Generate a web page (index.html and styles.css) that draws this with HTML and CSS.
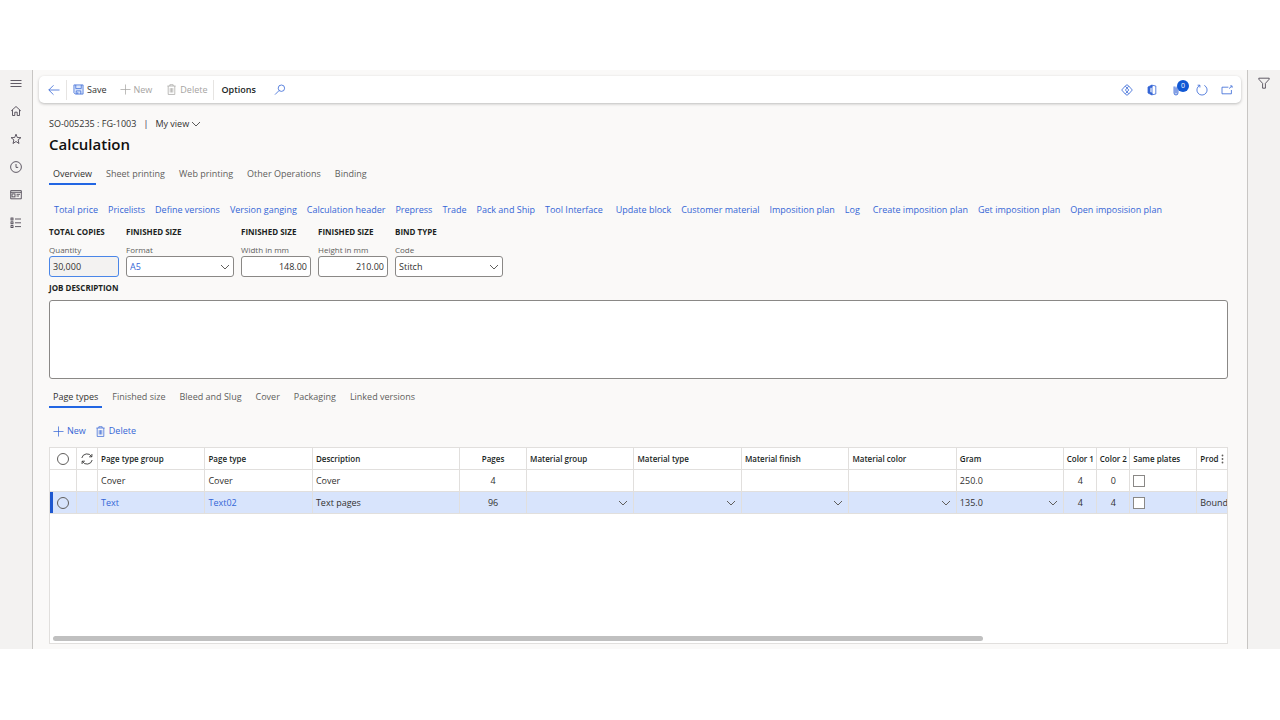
FILE: index.html
```html
<!DOCTYPE html>
<html lang="en">

<head>
    <meta charset="UTF-8">
    <meta name="viewport" content="width=device-width, initial-scale=1.0">
    <title>Calculation</title>
    <link rel="stylesheet" href="styles.css">
</head>

<body>
<div class="app">
    <nav class="rail" aria-label="Main">
        <button type="button" class="rail-btn" aria-label="Expand navigation">
            <svg class="icon" viewBox="0 0 12 12"><path d="M.5 3.5h11M.5 6.5h11M.5 9.5h11"/></svg>
        </button>
        <button type="button" class="rail-btn" aria-label="Home">
            <svg class="icon" viewBox="0 0 12 12"><path d="M1.2 5.9 6 1.5l4.8 4.4M2.5 5v5.5h2.3V7.2h2.4v3.3h2.3V5"/></svg>
        </button>
        <button type="button" class="rail-btn" aria-label="Favorites">
            <svg class="icon" viewBox="0 0 12 12"><path d="m6 1.2 1.3 3.3 3.6.2-2.8 2.2.9 3.6L6 8.5l-3 2 .9-3.6L1.1 4.7l3.6-.2z"/></svg>
        </button>
        <button type="button" class="rail-btn" aria-label="Recent">
            <svg class="icon" viewBox="0 0 12 12"><circle cx="6" cy="6" r="5.4"/><path d="M6 3v3.4h2.2"/></svg>
        </button>
        <button type="button" class="rail-btn" aria-label="Workspaces">
            <svg class="icon" viewBox="0 0 12 12"><path d="M.7 1.6h10.6v8.2H.7zM.7 3.3h10.6M6.5 5.3H10M6.5 7H9"/><rect x="2" y="4.9" width="3" height="3"/></svg>
        </button>
        <button type="button" class="rail-btn" aria-label="Modules">
            <svg class="icon" viewBox="0 0 12 12"><path d="M5 2h6M5 5.8h6M5 9.6h6"/><rect x="1" y="1" width="2" height="2"/><rect x="1" y="4.8" width="2" height="2"/><rect x="1" y="8.6" width="2" height="2"/></svg>
        </button>
    </nav>

    <main class="main">
        <div class="toolbar">
            <button type="button" class="tool tool-back" aria-label="Back">
                <svg class="icon blue" viewBox="0 0 12 12"><path d="M11.5 6H.8M5.5 1.3.8 6l4.7 4.7"/></svg>
            </button>
            <button type="button" class="tool tool-save">
                <svg class="icon-s blue" viewBox="0 0 12 12"><path d="M1 1h10v10H2.5L1 9.5z" fill="#dbe6fb"/><path d="M3 1v4h6V1M3.5 11V7.5h5V11M5.2 9v2"/></svg>
                Save
            </button>
            <button type="button" class="tool tool-new" disabled>
                <svg class="icon-s" viewBox="0 0 12 12"><path d="M6 .5v11M.5 6h11"/></svg>
                New
            </button>
            <button type="button" class="tool tool-delete" disabled>
                <svg class="icon-s" viewBox="0 0 12 12"><path d="M1.5 2.2h9M4.2 2.2V.8h3.6v1.4M2.4 2.2v9.2h7.2V2.2M4.6 4.5v4.8M6 4.5v4.8M7.4 4.5v4.8"/></svg>
                Delete
            </button>
            <button type="button" class="tool tool-options">Options</button>
            <button type="button" class="tool" aria-label="Search">
                <svg class="icon blue" viewBox="0 0 12 12"><circle cx="7.4" cy="4.2" r="3.2"/><path d="M5.1 6.5 1 10.6"/></svg>
            </button>
            <div class="toolbar-end">
                <button type="button" class="tool" aria-label="Power Apps">
                    <svg class="icon blue" viewBox="0 0 12 12"><path d="M4.6 1.6 6 .8l1.4.8L11.3 6l-3.9 4.4-1.4.8-1.4-.8L.7 6zM4.3 2.2 7.8 6l-3.5 3.8M7.7 2.2 4.4 6l3.3 3.8"/></svg>
                </button>
                <button type="button" class="tool" aria-label="Open in Office">
                    <svg class="icon blue" viewBox="0 0 12 12"><path d="M6 1 2 3v6l4 2V9L4 8.4V3.8L6 3.2z" fill="currentColor"/><path d="M6 1.2 9.8 2v8L6 10.8z"/></svg>
                </button>
                <button type="button" class="tool attach" aria-label="Attachments">
                    <svg class="icon blue" viewBox="0 0 12 12"><path d="M3 2.5V9a2 2 0 0 0 4 0V2.5M5 3.5V9" fill="#b9c9f0"/></svg>
                    <span class="badge">0</span>
                </button>
                <button type="button" class="tool" aria-label="Refresh">
                    <svg class="icon blue" viewBox="0 0 12 12"><path d="M8.3 1.4A5.1 5.1 0 1 1 3.7 1.4M1.6 1.2h2.3v2.3"/></svg>
                </button>
                <button type="button" class="tool" aria-label="Open in new window">
                    <svg class="icon blue" viewBox="0 0 12 12"><path d="M7.4 3.2H1v6.6h9.4V6M8 4.6l2.6-2.2M9.2 1.9h1.9v1.9"/></svg>
                </button>
            </div>
        </div>

        <div class="content">
            <div class="crumbs">
                <span>SO-005235 : FG-1003</span>
                <span class="crumb-bar">|</span>
                <button type="button" class="view-btn">My view
                    <svg class="icon-chev" viewBox="0 0 10 10"><path d="m1 3 4 4 4-4"/></svg>
                </button>
            </div>
            <h1>Calculation</h1>

            <nav class="tabs" aria-label="Calculation">
                <a href="#" class="tab active">Overview</a>
                <a href="#" class="tab">Sheet printing</a>
                <a href="#" class="tab">Web printing</a>
                <a href="#" class="tab">Other Operations</a>
                <a href="#" class="tab">Binding</a>
            </nav>

            <div class="actions">
                <div class="action-group">
                    <a href="#">Total price</a>
                    <a href="#">Pricelists</a>
                    <a href="#">Define versions</a>
                    <a href="#">Version ganging</a>
                    <a href="#">Calculation header</a>
                    <a href="#">Prepress</a>
                    <a href="#">Trade</a>
                    <a href="#">Pack and Ship</a>
                    <a href="#">Tool Interface</a>
                </div>
                <div class="action-group">
                    <a href="#">Update block</a>
                    <a href="#">Customer material</a>
                    <a href="#">Imposition plan</a>
                    <a href="#">Log</a>
                </div>
                <div class="action-group">
                    <a href="#">Create imposition plan</a>
                    <a href="#">Get imposition plan</a>
                    <a href="#">Open imposision plan</a>
                </div>
            </div>

            <form class="fields">
                <div class="field">
                    <h2>TOTAL COPIES</h2>
                    <label for="quantity">Quantity</label>
                    <input type="text" id="quantity" class="current" value="30,000" readonly>
                </div>
                <div class="field wide">
                    <h2>FINISHED SIZE</h2>
                    <label for="format">Format</label>
                    <select id="format" class="link"><option>A5</option></select>
                </div>
                <div class="field">
                    <h2>FINISHED SIZE</h2>
                    <label for="width">Width in mm</label>
                    <input type="text" id="width" class="number" value="148.00">
                </div>
                <div class="field">
                    <h2>FINISHED SIZE</h2>
                    <label for="height">Height in mm</label>
                    <input type="text" id="height" class="number" value="210.00">
                </div>
                <div class="field wide">
                    <h2>BIND TYPE</h2>
                    <label for="code">Code</label>
                    <select id="code"><option>Stitch</option></select>
                </div>
            </form>

            <label class="section-label" for="description">JOB DESCRIPTION</label>
            <textarea id="description" class="description"></textarea>

            <nav class="tabs" aria-label="Details">
                <a href="#" class="tab active">Page types</a>
                <a href="#" class="tab">Finished size</a>
                <a href="#" class="tab">Bleed and Slug</a>
                <a href="#" class="tab">Cover</a>
                <a href="#" class="tab">Packaging</a>
                <a href="#" class="tab">Linked versions</a>
            </nav>

            <div class="grid-tools">
                <button type="button" class="tool">
                    <svg class="icon-s" viewBox="0 0 12 12"><path d="M6 .5v11M.5 6h11"/></svg>
                    New
                </button>
                <button type="button" class="tool">
                    <svg class="icon-s" viewBox="0 0 12 12"><path d="M1.5 2.2h9M4.2 2.2V.8h3.6v1.4M2.4 2.2v9.2h7.2V2.2M4.6 4.5v4.8M6 4.5v4.8M7.4 4.5v4.8"/></svg>
                    Delete
                </button>
            </div>

            <div class="grid">
                <table>
                    <colgroup>
                        <col class="c-select"><col class="c-sync"><col class="c-std"><col class="c-std"><col class="c-desc">
                        <col class="c-pages"><col class="c-std"><col class="c-std"><col class="c-std"><col class="c-std">
                        <col class="c-std"><col class="c-color"><col class="c-color"><col class="c-plates"><col>
                    </colgroup>
                    <thead>
                        <tr>
                            <th class="mid"><input type="radio" name="all" aria-label="Select all"></th>
                            <th class="mid">
                                <button type="button" class="sync" aria-label="Refresh rows">
                                    <svg class="icon" viewBox="0 0 12 12"><path d="M.8 5A5.3 5.3 0 0 1 10.6 3.6M11.2 7A5.3 5.3 0 0 1 1.4 8.4M10.9 1v2.8H8.1M1.1 11V8.2h2.8"/></svg>
                                </button>
                            </th>
                            <th>Page type group</th>
                            <th>Page type</th>
                            <th>Description</th>
                            <th class="mid">Pages</th>
                            <th>Material group</th>
                            <th>Material type</th>
                            <th>Material finish</th>
                            <th>Material color</th>
                            <th>Gram</th>
                            <th class="mid">Color 1</th>
                            <th class="mid">Color 2</th>
                            <th>Same plates</th>
                            <th>
                                <div class="prod">Prod
                                    <svg class="dots" viewBox="0 0 3 10"><circle cx="1.5" cy="1.5" r=".9"/><circle cx="1.5" cy="5" r=".9"/><circle cx="1.5" cy="8.5" r=".9"/></svg>
                                </div>
                            </th>
                        </tr>
                    </thead>
                    <tbody>
                        <tr>
                            <td></td>
                            <td></td>
                            <td>Cover</td>
                            <td>Cover</td>
                            <td>Cover</td>
                            <td class="mid">4</td>
                            <td></td>
                            <td></td>
                            <td></td>
                            <td></td>
                            <td>250.0</td>
                            <td class="mid">4</td>
                            <td class="mid">0</td>
                            <td><input type="checkbox" aria-label="Same plates, Cover"></td>
                            <td></td>
                        </tr>
                        <tr class="selected">
                            <td class="mid"><input type="radio" name="row" aria-label="Select Text02"></td>
                            <td></td>
                            <td><a href="#">Text</a></td>
                            <td><a href="#">Text02</a></td>
                            <td>Text pages</td>
                            <td class="mid">96</td>
                            <td><select aria-label="Material group"><option></option></select></td>
                            <td><select aria-label="Material type"><option></option></select></td>
                            <td><select aria-label="Material finish"><option></option></select></td>
                            <td><select aria-label="Material color"><option></option></select></td>
                            <td><select aria-label="Gram"><option>135.0</option></select></td>
                            <td class="mid">4</td>
                            <td class="mid">4</td>
                            <td><input type="checkbox" aria-label="Same plates, Text02"></td>
                            <td>Bound</td>
                        </tr>
                    </tbody>
                </table>
                <div class="scroll-thumb"></div>
            </div>
        </div>
    </main>

    <aside class="filter-rail">
        <button type="button" class="rail-btn" aria-label="Show filters">
            <svg class="icon" viewBox="0 0 12 12"><path d="M.8 1.2h10.4v1L7.4 6.4v4.8H4.6V6.4L.8 2.2z"/></svg>
        </button>
    </aside>
</div>
</body>

</html>
```
FILE: styles.css
```css
* {
    box-sizing: border-box;
}

body {
    display: flex;
    flex-direction: column;
    min-height: 100vh;
    margin: 0;
    padding: 70px 0 71px;
    background-color: #fff;
    color: #323130;
    font-family: "Open Sans", "Noto Sans", sans-serif;
    font-size: 9px;
    line-height: 12px;
}

button, input, select, textarea {
    font: inherit;
    color: inherit;
}

button {
    display: flex;
    align-items: center;
    padding: 0;
    border: none;
    background: none;
    cursor: pointer;
}

a {
    color: #3566d6;
    text-decoration: none;
}

svg {
    flex: none;
    fill: none;
    stroke: currentColor;
    stroke-width: 0.8;
}

.icon {
    width: 12px;
    height: 12px;
}

.icon-s {
    width: 11px;
    height: 11px;
}

.icon-chev {
    width: 10px;
    height: 10px;
}

.blue {
    color: #3566d6;
}

.app {
    display: flex;
    flex: 1;
    background-color: #faf9f8;
}

/* Side rails */
.rail, .filter-rail {
    display: flex;
    flex-direction: column;
    align-items: center;
    width: 33px;
    background-color: #f3f2f1;
}

.rail {
    gap: 16px;
    padding-top: 7px;
    border-right: 1px solid #c8c6c4;
}

.filter-rail {
    padding-top: 7px;
    border-left: 1px solid #c8c6c4;
}

.rail-btn {
    color: #3b3542;
}

.main {
    display: flex;
    flex: 1;
    flex-direction: column;
    min-width: 0;
    padding: 6px 6px 5px;
}

/* Toolbar */
.toolbar {
    display: flex;
    align-items: center;
    height: 27px;
    padding: 0 8px 0 9px;
    border-radius: 5px;
    background-color: #fff;
    box-shadow: 0 1px 3px rgba(0, 0, 0, 0.25);
}

.tool {
    gap: 3px;
}

.tool:disabled {
    color: #a6a4a2;
    cursor: default;
}

.tool-back, .tool-delete {
    height: 20px;
    padding-right: 6px;
    border-right: 1px solid #e6e4e2;
}

.tool-save {
    padding: 0 13px 0 6px;
}

.tool-new {
    padding-right: 14px;
}

.tool-options {
    padding: 0 18px 0 7px;
    color: #201f1e;
    font-weight: 600;
}

.toolbar-end {
    display: flex;
    gap: 13px;
    margin-left: auto;
}

.attach {
    position: relative;
}

.badge {
    position: absolute;
    top: -4px;
    left: 6px;
    width: 12px;
    height: 12px;
    border-radius: 50%;
    background-color: #1158d4;
    color: #fff;
    font-size: 7px;
    text-align: center;
}

/* Page header */
.content {
    display: flex;
    flex: 1;
    flex-direction: column;
    padding: 15px 13px 0 10px;
}

.crumbs {
    display: flex;
    gap: 7px;
}

.crumb-bar {
    color: #3b2a4a;
}

.view-btn {
    gap: 2px;
}

h1 {
    margin: 4px 0 14px;
    color: #11100f;
    font-size: 15px;
    font-weight: 600;
    line-height: 20px;
}

.tabs {
    display: flex;
    gap: 6px;
}

.tab {
    height: 17px;
    padding: 0 4px;
    color: #605e5c;
}

.tab.active {
    border-bottom: 2px solid #2266e3;
    color: #323130;
}

.actions {
    display: flex;
    gap: 13px;
    margin: 19px 0 10px;
    padding-left: 5px;
    white-space: nowrap;
}

.action-group {
    display: flex;
    gap: 10px;
}

/* Form fields */
.fields {
    display: flex;
    gap: 7px;
}

.field {
    width: 70px;
}

.field.wide {
    width: 108px;
}

h2, .section-label {
    margin: 0;
    color: #201f1e;
    font-size: 8px;
    font-weight: 700;
    line-height: 12px;
    white-space: nowrap;
}

.field label {
    display: block;
    margin-top: 6px;
    color: #605e5c;
    font-size: 8px;
}

.field input, .field select {
    display: block;
    width: 100%;
    height: 21px;
    padding: 0 3px;
    border: 1px solid #8a8886;
    border-radius: 3px;
    background-color: #fff;
}

.field .current {
    border-color: #4a86e8;
    background-color: #f3f2f1;
}

.field .number {
    text-align: right;
}

.field .link {
    color: #3566d6;
}

select {
    appearance: none;
    background: url("data:image/svg+xml,%3Csvg xmlns='http://www.w3.org/2000/svg' viewBox='0 0 10 10'%3E%3Cpath d='m1 3 4 4 4-4' fill='none' stroke='%23605e5c'/%3E%3C/svg%3E") no-repeat right 3px center / 10px 10px;
}

.section-label {
    margin: 5px 0 6px;
}

.description {
    height: 79px;
    margin-bottom: 12px;
    border: 1px solid #8a8886;
    border-radius: 3px;
    background-color: #fff;
    resize: none;
}

/* Grid */
.grid-tools {
    display: flex;
    gap: 9px;
    margin: 17px 0 10px;
    padding-left: 4px;
    color: #3566d6;
}

.grid-tools button {
    color: inherit;
}

.grid {
    display: flex;
    flex: 1;
    flex-direction: column;
    justify-content: space-between;
    overflow: hidden;
    border: 1px solid #e1dfdd;
    background-color: #fff;
}

table {
    width: 100%;
    border-collapse: separate;
    border-spacing: 0;
    table-layout: fixed;
}

.c-select {
    width: 27px;
}

.c-sync {
    width: 21px;
}

.c-std {
    width: 9.13%;
}

.c-desc {
    width: 12.5%;
}

.c-pages {
    width: 67px;
}

.c-color {
    width: 33px;
}

.c-plates {
    width: 67px;
}

th, td {
    height: 22px;
    padding: 0 3px;
    border-right: 1px solid #e1dfdd;
    border-bottom: 1px solid #e1dfdd;
    overflow: hidden;
    text-align: left;
    vertical-align: middle;
    white-space: nowrap;
}

th {
    color: #201f1e;
    font-size: 8px;
    font-weight: 600;
}

th:last-child, td:last-child {
    border-right: none;
}

.mid {
    padding: 0;
    text-align: center;
}

.selected td {
    background-color: #d8e4fc;
}

.selected td:first-child {
    box-shadow: inset 3px 0 #1d57d0;
}

td select {
    display: block;
    width: 100%;
    height: 20px;
    padding: 0;
    border: none;
    background-position: right 2px center;
}

input[type="radio"] {
    display: block;
    width: 12px;
    height: 12px;
    margin: 0 auto;
    border: 1px solid #605e5c;
    border-radius: 50%;
    appearance: none;
}

input[type="checkbox"] {
    display: block;
    width: 12px;
    height: 12px;
    margin: 0;
    border: 1px solid #8a8886;
    background-color: #fff;
    appearance: none;
}

.sync {
    margin: 0 auto;
}

.prod {
    display: flex;
    align-items: center;
    justify-content: space-between;
}

.dots {
    width: 3px;
    height: 10px;
    fill: #605e5c;
    stroke: none;
}

.scroll-thumb {
    width: 79%;
    height: 5px;
    margin: 0 0 2px 3px;
    border-radius: 3px;
    background-color: #c0c0c0;
}
```
